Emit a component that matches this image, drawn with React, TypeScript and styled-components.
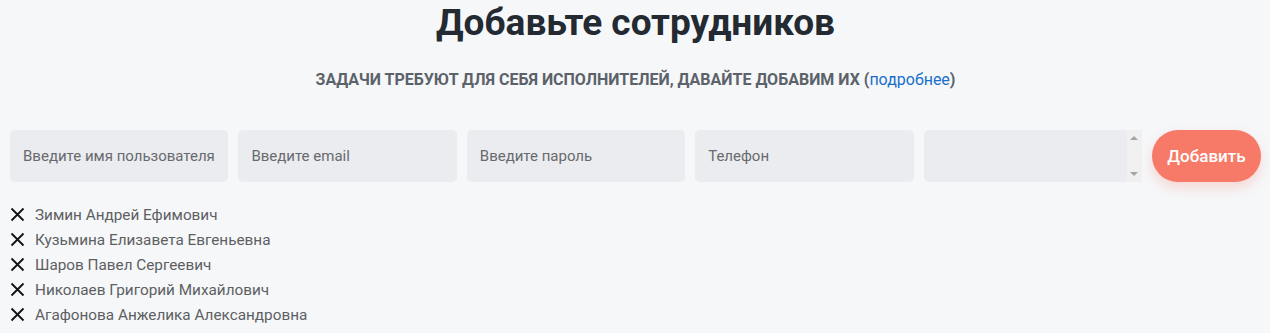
import React from 'react'
import styled, { createGlobalStyle } from 'styled-components'

const GlobalStyle = createGlobalStyle`
  html, body {
    margin: 0;
    padding: 0;
    background: #f6f7f9;
    font-family: Roboto, "Noto Sans", sans-serif;
  }
`

const Page = styled.div`
  padding: 0 9px 0 10px;
`

const Title = styled.h1`
  margin: 0;
  padding-top: 3px;
  text-align: center;
  font-size: 37px;
  line-height: 40px;
  font-weight: 700;
  color: #232a31;
`

const Subtitle = styled.p`
  margin: 28px 0 0;
  text-align: center;
  font-size: 16px;
  line-height: 18px;
  font-weight: 700;
  color: #5b626a;
  text-transform: uppercase;

  a {
    color: #1a6fc9;
    text-decoration: none;
    text-transform: none;
    font-weight: 400;
  }
`

const Form = styled.div`
  display: flex;
  gap: 10px;
  margin-top: 41px;
  height: 52px;
`

const Field = styled.input`
  box-sizing: border-box;
  flex: none;
  width: 218.4px;
  height: 52px;
  border: none;
  outline: none;
  border-radius: 5px;
  background: #ebecef;
  padding: 0 13px;
  font-family: inherit;
  font-size: 15px;
  color: #333;

  &::placeholder {
    color: #676a6e;
  }
`

const ListBox = styled.div`
  box-sizing: border-box;
  flex: none;
  width: 218.4px;
  height: 52px;
  border-radius: 5px 0 0 5px;
  background: #ebecef;
  display: flex;
  justify-content: flex-end;
`

const Scrollbar = styled.div`
  width: 15px;
  background: #f0f0f1;
  display: flex;
  flex-direction: column;
  justify-content: space-between;
  align-items: center;
  padding: 6px 0;
`

const Arrow = styled.span<{ $down?: boolean }>`
  width: 0;
  height: 0;
  border-left: 4px solid transparent;
  border-right: 4px solid transparent;
  ${({ $down }) =>
    $down ? 'border-top: 4px solid #a3a3a3;' : 'border-bottom: 4px solid #a3a3a3;'}
`

const AddButton = styled.button`
  flex: none;
  width: 109px;
  height: 52px;
  border: none;
  border-radius: 26px;
  background: #f77a68;
  color: #fff;
  font-family: inherit;
  font-size: 17px;
  font-weight: 500;
  box-shadow: 0 6px 12px rgba(247, 122, 104, 0.25);
  cursor: pointer;
`

const Staff = styled.ul`
  list-style: none;
  margin: 20px 0 0;
  padding: 0;
`

const Person = styled.li`
  display: flex;
  align-items: center;
  gap: 10px;
  height: 25px;
  font-size: 15.3px;
  color: #5d5f63;
`

const Remove = styled.svg`
  width: 15px;
  height: 15px;
  flex: none;
`

const people = [
  'Зимин Андрей Ефимович',
  'Кузьмина Елизавета Евгеньевна',
  'Шаров Павел Сергеевич',
  'Николаев Григорий Михайлович',
  'Агафонова Анжелика Александровна',
]

export default function App() {
  return (
    <Page>
      <GlobalStyle />
      <Title>Добавьте сотрудников</Title>
      <Subtitle>
        Задачи требуют для себя исполнителей, давайте добавим их (<a href="#">подробнее</a>)
      </Subtitle>
      <Form>
        <Field placeholder="Введите имя пользователя" />
        <Field placeholder="Введите email" />
        <Field type="password" placeholder="Введите пароль" />
        <Field placeholder="Телефон" />
        <ListBox>
          <Scrollbar>
            <Arrow />
            <Arrow $down />
          </Scrollbar>
        </ListBox>
        <AddButton>Добавить</AddButton>
      </Form>
      <Staff>
        {people.map(name => (
          <Person key={name}>
            <Remove viewBox="0 0 15 15">
              <path d="M1.5 1.5 L13.5 13.5 M13.5 1.5 L1.5 13.5" stroke="#111" strokeWidth="1.8" />
            </Remove>
            {name}
          </Person>
        ))}
      </Staff>
    </Page>
  )
}
